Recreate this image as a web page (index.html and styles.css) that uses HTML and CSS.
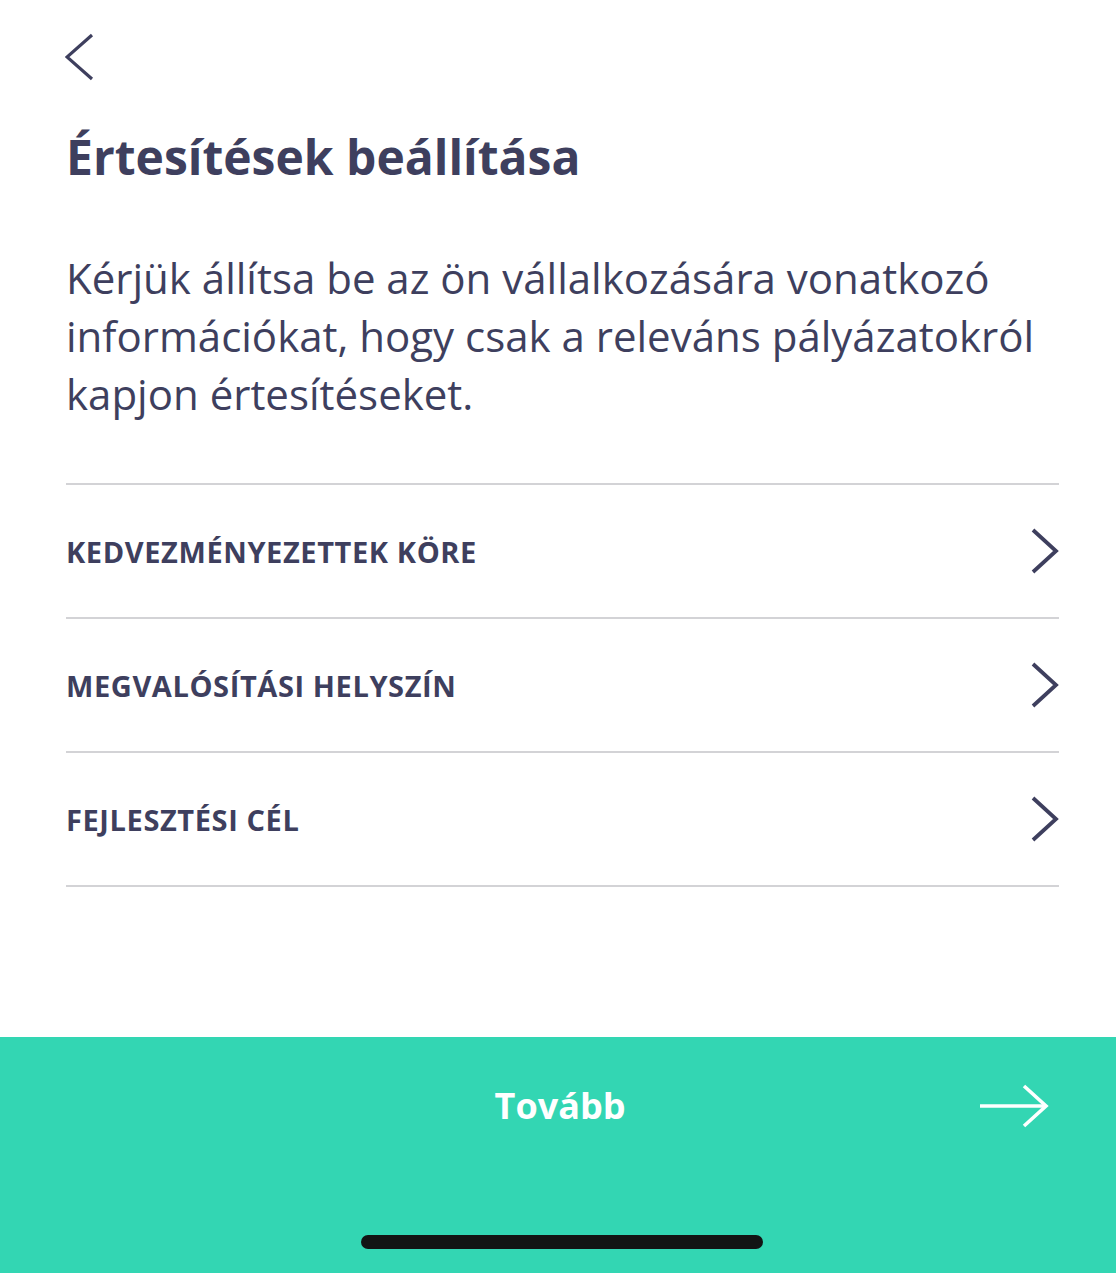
FILE: index.html
```html
<!DOCTYPE html>
<html lang="hu">
<head>
<meta charset="utf-8">
<title>Értesítések beállítása</title>
<link rel="stylesheet" href="styles.css">
</head>
<body>
<div class="screen">
  <header class="topbar">
    <button class="back" aria-label="Vissza">
      <svg width="30" height="48" viewBox="0 0 30 48"><polyline points="27,2 2,24 27,46" fill="none" stroke="#3e3f5e" stroke-width="3.2" stroke-linecap="butt" stroke-linejoin="miter"/></svg>
    </button>
  </header>
  <main class="content">
    <h1 class="title">Értesítések beállítása</h1>
    <p class="lead">Kérjük állítsa be az ön vállalkozására vonatkozó információkat, hogy csak a releváns pályázatokról kapjon értesítéseket.</p>
    <ul class="menu">
      <li class="menu-item"><span class="menu-label">KEDVEZMÉNYEZETTEK KÖRE</span>
        <svg class="chev" width="30" height="46" viewBox="0 0 30 46"><polyline points="4,2 27,23 4,44" fill="none" stroke="#3e3f5e" stroke-width="3.8"/></svg></li>
      <li class="menu-item"><span class="menu-label">MEGVALÓSÍTÁSI HELYSZÍN</span>
        <svg class="chev" width="30" height="46" viewBox="0 0 30 46"><polyline points="4,2 27,23 4,44" fill="none" stroke="#3e3f5e" stroke-width="3.8"/></svg></li>
      <li class="menu-item"><span class="menu-label">FEJLESZTÉSI CÉL</span>
        <svg class="chev" width="30" height="46" viewBox="0 0 30 46"><polyline points="4,2 27,23 4,44" fill="none" stroke="#3e3f5e" stroke-width="3.8"/></svg></li>
    </ul>
  </main>
  <footer class="footer">
    <div class="next">
      <span class="next-label">Tovább</span>
      <svg class="next-arrow" width="72" height="44" viewBox="0 0 72 44"><line x1="2" y1="22" x2="68" y2="22" stroke="#fff" stroke-width="3.6"/><polyline points="46,2 68,22 46,42" fill="none" stroke="#fff" stroke-width="3.6"/></svg>
    </div>
    <div class="home-indicator"></div>
  </footer>
</div>
</body>
</html>
```
FILE: styles.css
```css
* { box-sizing: border-box; }
html, body { margin: 0; padding: 0; background: #fff; }
body { font-family: "Open Sans", "Noto Sans", sans-serif; color: #3e3f5e; }
.screen { width: 1116px; height: 1276px; display: flex; flex-direction: column; }
.topbar { padding: 33px 0 0 65px; height: 127px; }
.back { background: none; border: 0; padding: 0; margin: 0; display: block; }
.back svg { display: block; }
.content { padding: 0 57px 0 66px; flex: 1; }
.title { margin: 0; font-size: 48px; font-weight: 700; line-height: 60px; letter-spacing: 0; }
.lead { margin: 62px 0 0; font-size: 42px; line-height: 58px; font-weight: 400; }
.menu { list-style: none; margin: 60px 0 0; padding: 0; border-top: 2px solid #d3d3d6; }
.menu-item { height: 134px; display: flex; align-items: center; justify-content: space-between; border-bottom: 2px solid #d3d3d6; }
.menu-label { font-size: 29px; font-weight: 700; letter-spacing: 0.6px; }
.chev { display: block; margin-right: 0; }
.footer { height: 236px; margin-bottom: 3px; background: #33d6b3; display: flex; flex-direction: column; align-items: center; }
.next { width: 100%; height: 136px; display: flex; align-items: center; justify-content: center; position: relative; }
.next-label { color: #fff; font-size: 36px; font-weight: 700; margin-left: 4px; }
.next-arrow { position: absolute; right: 66px; top: 47px; }
.home-indicator { width: 402px; height: 14px; border-radius: 7px; background: #121414; margin-top: 62px; margin-left: 8px; }
```
